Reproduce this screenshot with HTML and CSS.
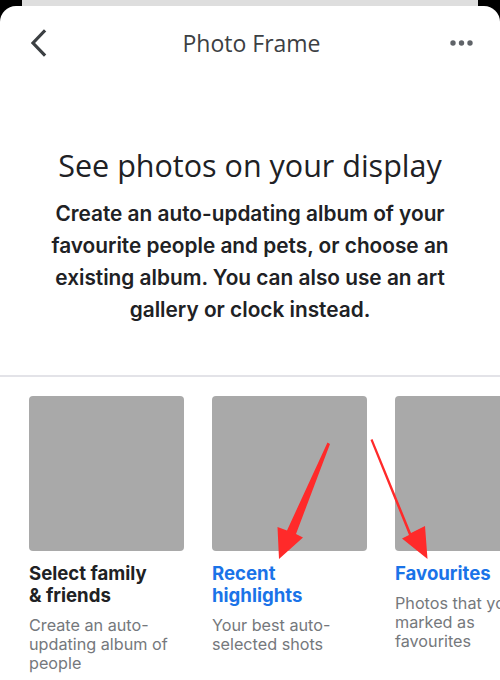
FILE: index.html
```html
<!DOCTYPE html>
<html lang="en">
<head>
<meta charset="utf-8">
<title>Photo Frame</title>
<link rel="stylesheet" href="styles.css">
</head>
<body>
<div class="backcard"></div>
<main class="sheet">
  <header class="topbar">
    <button class="icon-btn back" aria-label="Back">
      <svg width="18" height="28" viewBox="0 0 18 28"><path d="M15 2.5 L4 14 L15 25.5" fill="none" stroke="#3c4043" stroke-width="3.2" stroke-linecap="square"/></svg>
    </button>
    <h1 class="title">Photo Frame</h1>
    <button class="icon-btn more" aria-label="More">
      <svg width="24" height="8" viewBox="0 0 24 8"><circle cx="3" cy="4" r="2.7" fill="#5f6368"/><circle cx="11.5" cy="4" r="2.7" fill="#5f6368"/><circle cx="20" cy="4" r="2.7" fill="#5f6368"/></svg>
    </button>
  </header>

  <section class="intro">
    <h2 class="heading">See photos on your display</h2>
    <p class="lead">Create an auto-updating album of your favourite people and pets, or choose an existing album. You can also use an art gallery or clock instead.</p>
  </section>

  <hr class="divider">

  <section class="carousel">
    <div class="card">
      <div class="thumb"></div>
      <h3 class="card-title">Select family<br>&amp; friends</h3>
      <p class="card-desc">Create an auto-updating album of people</p>
    </div>
    <div class="card">
      <div class="thumb"></div>
      <h3 class="card-title blue">Recent<br>highlights</h3>
      <p class="card-desc">Your best auto-selected shots</p>
    </div>
    <div class="card">
      <div class="thumb"></div>
      <h3 class="card-title blue">Favourites</h3>
      <p class="card-desc">Photos that you marked as favourites</p>
    </div>
  </section>

  <svg class="arrows" width="500" height="680" viewBox="0 0 500 680">
    <path d="M327.5 442.5 L330 444 L296 534 L303 537.5 L279 559 L277.5 527 L287 530.5 Z" fill="#ff2a2a"/>
    <path d="M370.5 440 L372.5 439 L411 533 L425 526 L427.5 559 L402 538.5 L409 535 Z" fill="#ff2a2a"/>
  </svg>
</main>
</body>
</html>
```
FILE: styles.css
```css
* { box-sizing: border-box; }
html, body { margin: 0; padding: 0; }
body {
  background: #000;
  width: 500px;
  height: 680px;
  overflow: hidden;
  font-family: Inter, "Liberation Sans", sans-serif;
}
.backcard {
  height: 6px;
  margin: 0 22px;
  background: #dedede;
}
.sheet {
  position: relative;
  background: #fff;
  border-radius: 16px 16px 0 0;
  height: 674px;
  overflow: hidden;
}
.topbar {
  height: 74px;
  display: flex;
  align-items: center;
  justify-content: space-between;
  padding: 0 26px 0 29px;
}
.icon-btn {
  border: 0;
  background: none;
  padding: 0;
  display: flex;
  align-items: center;
  justify-content: center;
  width: 24px;
  height: 30px;
}
.back { justify-content: flex-start; }
.title {
  margin: 0;
  font-family: "Open Sans", Roboto, sans-serif;
  font-weight: 400;
  font-size: 23px;
  color: #3c4043;
}
.intro {
  text-align: center;
  padding: 0 10px;
}
.heading {
  margin: 67px 0 0;
  font-family: "Open Sans", Roboto, sans-serif;
  font-weight: 400;
  font-size: 30.5px;
  line-height: 36px;
  color: #202124;
}
.lead {
  margin: 15px auto 0;
  max-width: 400px;
  font-size: 20.8px;
  font-weight: 600;
  line-height: 32px;
  color: #202124;
}
.divider {
  border: 0;
  height: 1.5px;
  background: #e3e3e8;
  margin: 49px 0 0;
}
.carousel {
  display: flex;
  gap: 28px;
  padding: 19px 0 0 29px;
  overflow: hidden;
}
.card {
  flex: 0 0 155px;
  width: 155px;
}
.thumb {
  width: 155px;
  height: 155px;
  border-radius: 4px;
  background: #a9a9a9;
}
.card-title {
  margin: 11px 0 0;
  font-size: 18.6px;
  font-weight: 700;
  line-height: 22px;
  color: #202124;
}
.card-title.blue { color: #1a73e8; }
.card-desc {
  margin: 10px 0 0;
  font-size: 16.2px;
  font-weight: 400;
  line-height: 19px;
  color: #75787c;
  width: 150px;
}
.arrows {
  position: absolute;
  left: 0;
  top: -6px;
  pointer-events: none;
}
```
